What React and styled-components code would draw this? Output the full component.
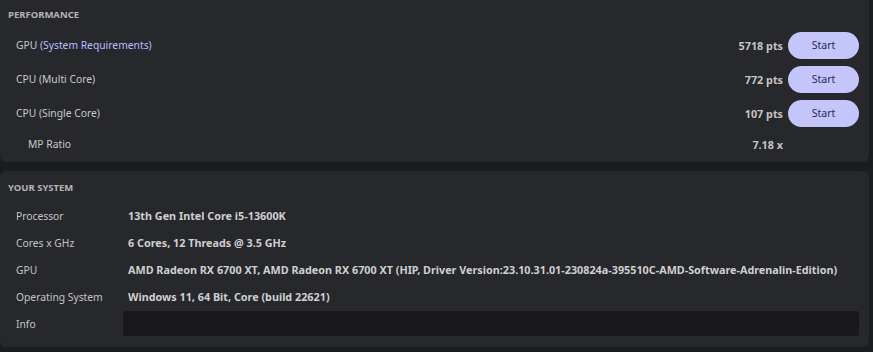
import React from "react";
import styled, { createGlobalStyle } from "styled-components";

const GlobalStyle = createGlobalStyle`
  html, body {
    margin: 0;
    padding: 0;
    background: #1b1c1f;
    font-family: "Noto Sans", "Open Sans", sans-serif;
  }
`;

const Page = styled.div`
  width: 869px;
  display: flex;
  flex-direction: column;
  gap: 9px;
`;

const Panel = styled.section`
  background: #27282c;
  border-radius: ${(p) => (p.$top ? "0 0 6px 6px" : "6px")};
  padding: ${(p) => (p.$top ? "8px 10px 4px 8px" : "10px 10px 10px 8px")};
`;

const Header = styled.div`
  font-size: 9.5px;
  line-height: 14px;
  font-weight: 700;
  color: #b4b4b6;
  text-transform: uppercase;
  margin-bottom: ${(p) => p.$gap}px;
`;

const PerfRow = styled.div`
  display: flex;
  align-items: center;
  height: ${(p) => p.$h}px;
  padding-left: ${(p) => (p.$indent ? 20 : 8)}px;
`;

const Label = styled.span`
  font-size: 10.3px;
  color: #c9c9cb;
  flex: 1;
`;

const Link = styled.span`
  color: #b9bcff;
`;

const Points = styled.span`
  font-size: 10.8px;
  font-weight: 700;
  color: #c4c4c6;
  margin-right: 5px;
`;

const StartButton = styled.button`
  width: 71px;
  height: 27px;
  border: none;
  border-radius: 14px;
  background: #c4c5fa;
  color: #272a5a;
  font-family: inherit;
  font-size: 10.5px;
  padding: 0;
  cursor: pointer;
`;

const Spacer = styled.span`
  width: 71px;
`;

const SysGrid = styled.div`
  display: grid;
  grid-template-columns: 107px 1fr;
  grid-auto-rows: 27px;
  align-items: center;
  padding-left: 8px;
`;

const SysLabel = styled.span`
  font-size: 10.3px;
  color: #c4c4c6;
`;

const SysValue = styled.span`
  font-size: 10.8px;
  font-weight: 700;
  color: #cfcfd1;
  padding-left: 5px;
  white-space: nowrap;
`;

const InfoBox = styled.div`
  height: 25px;
  background: #19191b;
  border-radius: 3px;
`;

const perf = [
  { label: "GPU", link: "(System Requirements)", pts: "5718 pts" },
  { label: "CPU (Multi Core)", pts: "772 pts" },
  { label: "CPU (Single Core)", pts: "107 pts" },
];

const system = [
  ["Processor", "13th Gen Intel Core i5-13600K"],
  ["Cores x GHz", "6 Cores, 12 Threads @ 3.5 GHz"],
  [
    "GPU",
    "AMD Radeon RX 6700 XT, AMD Radeon RX 6700 XT (HIP, Driver Version:23.10.31.01-230824a-395510C-AMD-Software-Adrenalin-Edition)",
  ],
  ["Operating System", "Windows 11, 64 Bit, Core (build 22621)"],
];

export default function App() {
  return (
    <Page>
      <GlobalStyle />
      <Panel $top>
        <Header $gap={6}>Performance</Header>
        {perf.map((r) => (
          <PerfRow key={r.label} $h={34}>
            <Label>
              {r.label} {r.link && <Link>{r.link}</Link>}
            </Label>
            <Points>{r.pts}</Points>
            <StartButton>Start</StartButton>
          </PerfRow>
        ))}
        <PerfRow $h={28} $indent>
          <Label>MP Ratio</Label>
          <Points>7.18 x</Points>
          <Spacer />
        </PerfRow>
      </Panel>
      <Panel>
        <Header $gap={7}>Your System</Header>
        <SysGrid>
          {system.map(([k, v]) => (
            <React.Fragment key={k}>
              <SysLabel>{k}</SysLabel>
              <SysValue>{v}</SysValue>
            </React.Fragment>
          ))}
          <SysLabel>Info</SysLabel>
          <InfoBox />
        </SysGrid>
      </Panel>
    </Page>
  );
}
